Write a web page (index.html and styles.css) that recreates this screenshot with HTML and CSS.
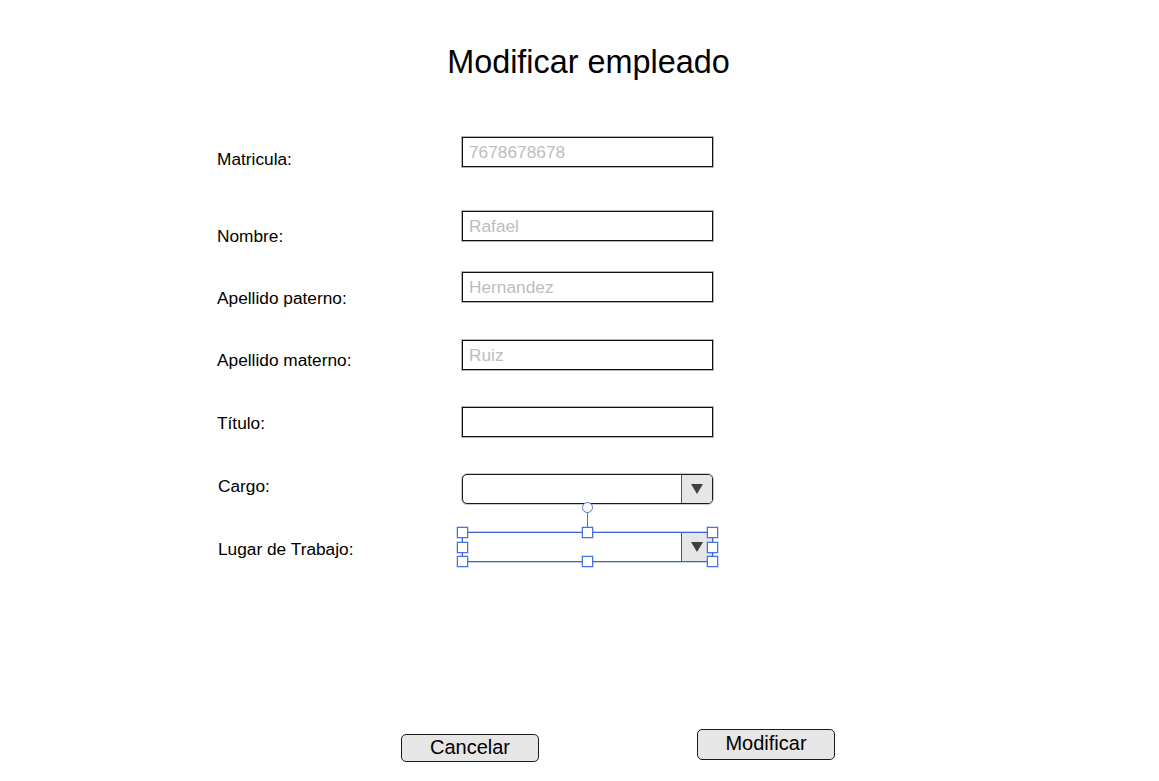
FILE: index.html
```html
<!DOCTYPE html>
<html lang="es">
<head>
<meta charset="utf-8">
<title>Modificar empleado</title>
<link rel="stylesheet" href="styles.css">
</head>
<body>
<main class="page">
  <h1 class="title">Modificar empleado</h1>

  <form class="form">
    <label class="lbl lbl-matricula">Matricula:</label>
    <div class="field"><span class="ph">7678678678</span></div>

    <label class="lbl lbl-nombre">Nombre:</label>
    <div class="field"><span class="ph">Rafael</span></div>

    <label class="lbl lbl-paterno">Apellido paterno:</label>
    <div class="field"><span class="ph">Hernandez</span></div>

    <label class="lbl lbl-materno">Apellido materno:</label>
    <div class="field"><span class="ph">Ruiz</span></div>

    <label class="lbl lbl-titulo">Título:</label>
    <div class="field"></div>

    <label class="lbl lbl-cargo">Cargo:</label>
    <div class="select">
      <div class="select-value"></div>
      <div class="select-btn"><span class="tri"></span></div>
    </div>

    <label class="lbl lbl-lugar">Lugar de Trabajo:</label>
    <div class="select-wrap">
      <div class="select is-selected">
        <div class="select-value"></div>
        <div class="select-btn"><span class="tri"></span></div>
      </div>
      <span class="rot-line"></span>
      <span class="rot"></span>
      <span class="h h-tl"></span>
      <span class="h h-tm"></span>
      <span class="h h-tr"></span>
      <span class="h h-ml"></span>
      <span class="h h-mr"></span>
      <span class="h h-bl"></span>
      <span class="h h-bm"></span>
      <span class="h h-br"></span>
    </div>
  </form>

  <div class="actions">
    <button class="btn btn-cancel" type="button">Cancelar</button>
    <button class="btn btn-modify" type="button">Modificar</button>
  </div>
</main>
</body>
</html>
```

FILE: styles.css
```css
* { box-sizing: border-box; }

html, body {
  margin: 0;
  padding: 0;
  background: #ffffff;
}

body {
  font-family: "Liberation Sans", Arial, sans-serif;
  color: #000;
}

.page {
  width: 1159px;
  height: 781px;
  overflow: hidden;
}

.title {
  margin: 44px 0 0 0;
  padding-left: 18px;
  font-size: 32.4px;
  line-height: 37px;
  font-weight: normal;
  text-align: center;
}

.form {
  display: grid;
  grid-template-columns: 245px 251px;
  grid-template-rows: 74px 61px 68px 67px 67px 58px 30px;
  margin: 56px 0 0 217px;
  align-items: start;
}

.lbl {
  font-size: 17.3px;
  line-height: 20px;
  white-space: nowrap;
}
.lbl-matricula { margin-top: 12px; }
.lbl-nombre    { margin-top: 15px; }
.lbl-paterno   { margin-top: 16px; }
.lbl-materno   { margin-top: 10px; }
.lbl-titulo    { margin-top: 6px; }
.lbl-cargo     { margin-top: 2px; padding-left: 1px; }
.lbl-lugar     { margin-top: 7px; padding-left: 1px; }

.field {
  height: 30px;
  border: 1px solid #111;
  box-shadow: 0 0 0 1px rgba(0, 0, 0, 0.3);
  padding: 4px 6px 0;
  font-size: 17.3px;
  line-height: 20px;
  background: #fff;
}

.ph { color: #bdbdbd; }

.select {
  height: 30px;
  display: flex;
  border: 1px solid #1a1a1a;
  border-radius: 5px;
  overflow: hidden;
  background: #fff;
  box-shadow: 0 0 0 1px rgba(0, 0, 0, 0.2);
}

.select-value { flex: 1; }

.select-btn {
  width: 31px;
  border-left: 1px solid #555;
  background: #e6e6e6;
  display: flex;
  align-items: center;
  justify-content: center;
}

.tri {
  width: 0;
  height: 0;
  border-left: 6.5px solid transparent;
  border-right: 6.5px solid transparent;
  border-top: 10px solid #404040;
}

.select-wrap {
  position: relative;
}

.select.is-selected {
  border-color: #3f63cf;
  border-radius: 0;
  box-shadow: 0 0 0 0.6px rgba(63, 99, 207, 0.5);
}

.h {
  position: absolute;
  width: 11px;
  height: 11px;
  background: #fff;
  border: 1px solid #4a72e8;
  box-shadow: 0 0 0 0.6px rgba(74, 114, 232, 0.45);
}
.h-tl { left: -5px;  top: -5px; }
.h-tm { left: 120px; top: -5px; }
.h-tr { right: -5px; top: -5px; }
.h-ml { left: -5px;  top: 10px; }
.h-mr { right: -5px; top: 10px; }
.h-bl { left: -5px;  bottom: -5px; }
.h-bm { left: 120px; bottom: -5px; }
.h-br { right: -5px; bottom: -5px; }

.rot {
  position: absolute;
  left: 120px;
  top: -30px;
  width: 11px;
  height: 11px;
  border-radius: 50%;
  background: #fff;
  border: 1px solid #4a72e8;
}

.rot-line {
  position: absolute;
  left: 125px;
  top: -20px;
  width: 1px;
  height: 16px;
  background: #4a72e8;
}

.actions {
  display: flex;
  align-items: flex-start;
  margin: 167px 0 0 401px;
  gap: 158px;
}

.btn {
  width: 138px;
  padding: 0;
  border: 1px solid #1a1a1a;
  border-radius: 5px;
  background: #e6e6e6;
  font-family: "Liberation Sans", Arial, sans-serif;
  font-size: 20px;
  color: #000;
  line-height: 1;
}

.btn-cancel {
  height: 28px;
  margin-top: 5px;
  padding-bottom: 2px;
}

.btn-modify {
  height: 31px;
  padding-bottom: 3px;
}
```
